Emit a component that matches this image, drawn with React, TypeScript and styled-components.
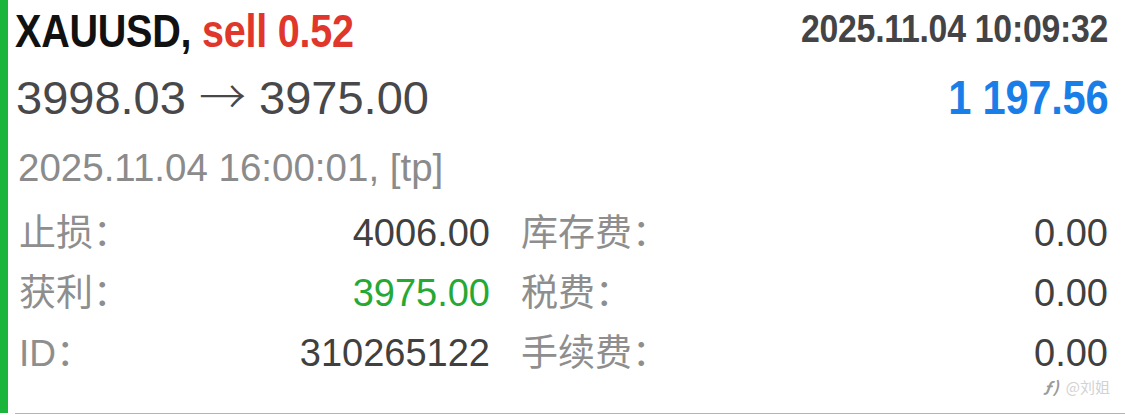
import React from "react";
import styled, { createGlobalStyle } from "styled-components";

const Global = createGlobalStyle`
  html, body { margin: 0; padding: 0; background: #ffffff; }
  body { width: 1125px; height: 419px; overflow: hidden; font-family: "Liberation Sans", Arial, sans-serif; }
`;

const Page = styled.div`
  position: relative;
  width: 1125px;
  height: 419px;
  background: #fff;
`;

const Card = styled.div`
  display: flex;
  height: 414px;
`;

const Bar = styled.div`
  width: 8px;
  height: 413px;
  background: #1cb53c;
  flex: none;
`;

const Content = styled.div`
  flex: 1;
  margin-left: 7px;
  padding: 0 17px 0 3px;
  border-bottom: 1px solid #b4b4b4;
  display: flex;
  flex-direction: column;
`;

const HeaderRow = styled.div`
  display: flex;
  justify-content: space-between;
  align-items: flex-start;
  height: 62px;
  margin-left: -3px;
`;

/* Condensed bold face: Helvetica Neue Condensed look, narrowed horizontally */
const Condensed = styled.span<{
  $size: number;
  $color: string;
  $lh: number;
  $scale: number;
  $origin: "left" | "right";
}>`
  display: inline-block;
  font-family: "Liberation Sans", Arial, sans-serif;
  font-weight: 700;
  font-size: ${(p) => p.$size}px;
  line-height: ${(p) => p.$lh}px;
  letter-spacing: -0.3px;
  color: ${(p) => p.$color};
  white-space: nowrap;
  transform: scaleX(${(p) => p.$scale});
  transform-origin: ${(p) => p.$origin} center;
`;

const Red = styled.span`
  color: #e0362b;
`;

const PriceRow = styled.div`
  display: flex;
  justify-content: space-between;
  align-items: baseline;
  height: 64px;
  line-height: 64px;
`;

const Prices = styled.span`
  font-size: 47px;
  color: #48484a;
  white-space: nowrap;
  margin-left: -2px;
`;

const Arrow = styled.span`
  font-family: "Noto Sans CJK SC", "DejaVu Sans", sans-serif;
  font-weight: 300;
  font-size: 47px;
`;

const CloseLine = styled.div`
  height: 77px;
  padding-top: 23px;
  box-sizing: border-box;
  font-size: 38.5px;
  line-height: 1;
  color: #8b8b8b;
  white-space: nowrap;
`;

const Grid = styled.div`
  display: grid;
  grid-template-columns: 472px 1fr;
  column-gap: 30px;
  grid-auto-rows: 60px;
`;

const Field = styled.div`
  display: flex;
  justify-content: space-between;
  align-items: baseline;
  line-height: 60px;
  height: 60px;
`;

const Label = styled.span`
  font-family: "Liberation Sans", "Noto Sans CJK SC", sans-serif;
  font-size: 37px;
  color: #8e8e8e;
  white-space: nowrap;
  margin-left: 1px;
`;

const Value = styled.span<{ $color?: string }>`
  font-size: 38px;
  color: ${(p) => p.$color || "#404040"};
  white-space: nowrap;
`;

const Watermark = styled.div`
  position: absolute;
  right: 15px;
  top: 374px;
  font-family: "Noto Sans CJK SC", sans-serif;
  font-size: 15px;
  color: #d2d2d2;
  display: flex;
  align-items: center;
  gap: 7px;
`;

const WbIcon = styled.span`
  font-style: italic;
  font-weight: 700;
  color: #9a9a9a;
  font-size: 16px;
`;

const fields: { label: string; value: string; color?: string }[] = [
  { label: "止损：", value: "4006.00" },
  { label: "库存费：", value: "0.00" },
  { label: "获利：", value: "3975.00", color: "#26a934" },
  { label: "税费：", value: "0.00" },
  { label: "ID：", value: "310265122" },
  { label: "手续费：", value: "0.00" },
];

export default function App() {
  return (
    <Page>
      <Global />
      <Card>
        <Bar />
        <Content>
          <HeaderRow>
            <Condensed $size={46} $color="#111111" $lh={62} $scale={0.86} $origin="left">
              XAUUSD, <Red>sell 0.52</Red>
            </Condensed>
            <Condensed $size={38} $color="#444446" $lh={58} $scale={0.89} $origin="right">
              2025.11.04 10:09:32
            </Condensed>
          </HeaderRow>
          <PriceRow>
            <Prices>
              3998.03 <Arrow>→</Arrow> 3975.00
            </Prices>
            <Condensed $size={49} $color="#1a7ee8" $lh={64} $scale={0.85} $origin="right">
              1 197.56
            </Condensed>
          </PriceRow>
          <CloseLine>2025.11.04 16:00:01, [tp]</CloseLine>
          <Grid>
            {fields.map((f) => (
              <Field key={f.label}>
                <Label>{f.label}</Label>
                <Value $color={f.color}>{f.value}</Value>
              </Field>
            ))}
          </Grid>
        </Content>
      </Card>
      <Watermark>
        <WbIcon>ƒ)</WbIcon>
        <span>@刘姐</span>
      </Watermark>
    </Page>
  );
}
